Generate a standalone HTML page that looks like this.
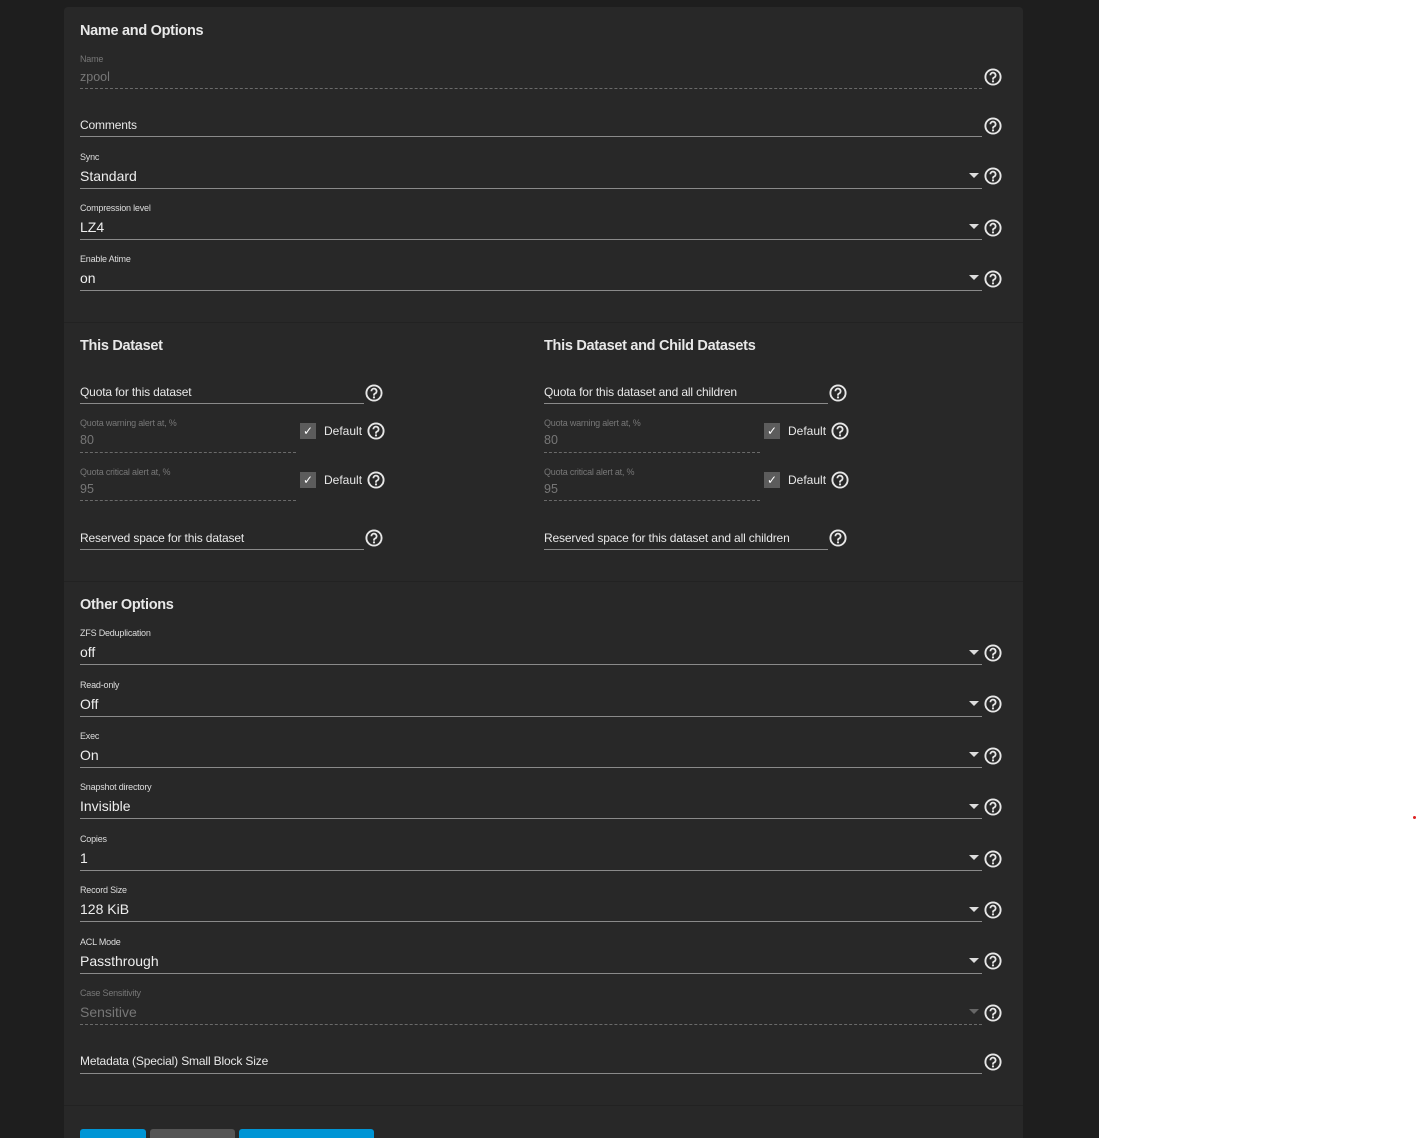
<!DOCTYPE html>
<html><head><meta charset="utf-8"><style>
*{margin:0;padding:0;box-sizing:border-box}
html,body{width:1418px;height:1138px;overflow:hidden}
body{background:#fff;font-family:"Liberation Sans",sans-serif;position:relative}
#bg{position:absolute;left:0;top:0;width:1099px;height:1138px;background:#1e1e1e}
#card{position:absolute;left:64px;top:7px;width:959px;height:1131px;background:#282828;border-radius:4px 4px 0 0}
.a{position:absolute;white-space:nowrap;line-height:1}
.t{font-size:14.5px;font-weight:bold;color:#e8e8e8;letter-spacing:-0.3px}
.l{font-size:9px;color:#ddd;letter-spacing:-0.2px}
.ld{font-size:9px;color:#777;letter-spacing:-0.2px}
.v{font-size:14px;color:#eee}
.vd{font-size:12.5px;color:#777}
.p{font-size:12px;color:#e8e8e8;letter-spacing:-0.15px}
.ln{position:absolute;height:1px;background:#8a8a8a}
.dl{position:absolute;height:0;border-top:1px dashed #6a6a6a}
.sep{position:absolute;left:64px;width:959px;height:1px;background:#222}
.h{position:absolute;width:18px;height:18px}
.ar{position:absolute;width:0;height:0;border-left:5px solid transparent;border-right:5px solid transparent;border-top:5px solid #ddd}
.cb{position:absolute;width:16px;height:16px;background:#5c5c5c}
.ck{position:absolute;color:#fff;font-size:12px;line-height:1}
.df{font-size:12px;color:#e8e8e8}
.btn{position:absolute;top:1129px;height:9px;border-radius:3px 3px 0 0}
</style></head><body>
<div id="bg"></div>
<div id="card"></div>
<svg width="0" height="0" style="position:absolute"><defs><symbol id="q" viewBox="0 0 18 18"><circle cx="9" cy="9" r="7.6" fill="none" stroke="#e6e6e6" stroke-width="1.9"/><path d="M6.4 7.2a2.6 2.6 0 1 1 3.6 2.4c-.7.3-1 .8-1 1.5v.5" fill="none" stroke="#e6e6e6" stroke-width="1.8"/><circle cx="9" cy="13.4" r="1.1" fill="#e6e6e6"/></symbol></defs></svg>

<div class="a t" style="left:80px;top:24px">Name and Options</div>
<div class="a ld" style="left:80px;top:55px">Name</div>
<div class="a vd" style="left:80px;top:71px">zpool</div>
<div class="dl" style="left:80px;width:902px;top:88px"></div>
<svg class="h" style="left:984px;top:68px"><use href="#q"/></svg>

<div class="a p" style="left:80px;top:119px">Comments</div>
<div class="ln" style="left:80px;width:902px;top:136px"></div>
<svg class="h" style="left:984px;top:117px"><use href="#q"/></svg>

<div class="a l" style="left:80px;top:153px">Sync</div>
<div class="a v" style="left:80px;top:169px">Standard</div>
<div class="ln" style="left:80px;width:902px;top:188px"></div>
<div class="ar" style="left:969px;top:173px"></div>
<svg class="h" style="left:984px;top:167px"><use href="#q"/></svg>

<div class="a l" style="left:80px;top:204px">Compression level</div>
<div class="a v" style="left:80px;top:220px">LZ4</div>
<div class="ln" style="left:80px;width:902px;top:239px"></div>
<div class="ar" style="left:969px;top:224px"></div>
<svg class="h" style="left:984px;top:219px"><use href="#q"/></svg>

<div class="a l" style="left:80px;top:255px">Enable Atime</div>
<div class="a v" style="left:80px;top:271px">on</div>
<div class="ln" style="left:80px;width:902px;top:290px"></div>
<div class="ar" style="left:969px;top:275px"></div>
<svg class="h" style="left:984px;top:270px"><use href="#q"/></svg>

<div class="sep" style="top:322px"></div>

<div class="a t" style="left:80px;top:339px">This Dataset</div>
<div class="a p" style="left:80px;top:386px">Quota for this dataset</div>
<div class="ln" style="left:80px;width:284px;top:403px"></div>
<svg class="h" style="left:365px;top:384px"><use href="#q"/></svg>
<div class="a ld" style="left:80px;top:419px">Quota warning alert at, %</div>
<div class="a vd" style="left:80px;top:434px">80</div>
<div class="dl" style="left:80px;width:216px;top:452px"></div>
<div class="cb" style="left:300px;top:423px"></div><div class="ck" style="left:303px;top:425px">✓</div>
<div class="a df" style="left:324px;top:425px">Default</div>
<svg class="h" style="left:367px;top:422px"><use href="#q"/></svg>
<div class="a ld" style="left:80px;top:468px">Quota critical alert at, %</div>
<div class="a vd" style="left:80px;top:483px">95</div>
<div class="dl" style="left:80px;width:216px;top:500px"></div>
<div class="cb" style="left:300px;top:472px"></div><div class="ck" style="left:303px;top:474px">✓</div>
<div class="a df" style="left:324px;top:474px">Default</div>
<svg class="h" style="left:367px;top:471px"><use href="#q"/></svg>
<div class="a p" style="left:80px;top:532px">Reserved space for this dataset</div>
<div class="ln" style="left:80px;width:284px;top:549px"></div>
<svg class="h" style="left:365px;top:529px"><use href="#q"/></svg>

<div class="a t" style="left:544px;top:339px">This Dataset and Child Datasets</div>
<div class="a p" style="left:544px;top:386px">Quota for this dataset and all children</div>
<div class="ln" style="left:544px;width:284px;top:403px"></div>
<svg class="h" style="left:829px;top:384px"><use href="#q"/></svg>
<div class="a ld" style="left:544px;top:419px">Quota warning alert at, %</div>
<div class="a vd" style="left:544px;top:434px">80</div>
<div class="dl" style="left:544px;width:216px;top:452px"></div>
<div class="cb" style="left:764px;top:423px"></div><div class="ck" style="left:767px;top:425px">✓</div>
<div class="a df" style="left:788px;top:425px">Default</div>
<svg class="h" style="left:831px;top:422px"><use href="#q"/></svg>
<div class="a ld" style="left:544px;top:468px">Quota critical alert at, %</div>
<div class="a vd" style="left:544px;top:483px">95</div>
<div class="dl" style="left:544px;width:216px;top:500px"></div>
<div class="cb" style="left:764px;top:472px"></div><div class="ck" style="left:767px;top:474px">✓</div>
<div class="a df" style="left:788px;top:474px">Default</div>
<svg class="h" style="left:831px;top:471px"><use href="#q"/></svg>
<div class="a p" style="left:544px;top:532px">Reserved space for this dataset and all children</div>
<div class="ln" style="left:544px;width:284px;top:549px"></div>
<svg class="h" style="left:829px;top:529px"><use href="#q"/></svg>

<div class="sep" style="top:581px"></div>

<div class="a t" style="left:80px;top:598px">Other Options</div>

<div class="a l" style="left:80px;top:629px">ZFS Deduplication</div>
<div class="a v" style="left:80px;top:645px">off</div>
<div class="ln" style="left:80px;width:902px;top:664px"></div>
<div class="ar" style="left:969px;top:650px"></div>
<svg class="h" style="left:984px;top:644px"><use href="#q"/></svg>

<div class="a l" style="left:80px;top:681px">Read-only</div>
<div class="a v" style="left:80px;top:697px">Off</div>
<div class="ln" style="left:80px;width:902px;top:716px"></div>
<div class="ar" style="left:969px;top:701px"></div>
<svg class="h" style="left:984px;top:695px"><use href="#q"/></svg>

<div class="a l" style="left:80px;top:732px">Exec</div>
<div class="a v" style="left:80px;top:748px">On</div>
<div class="ln" style="left:80px;width:902px;top:767px"></div>
<div class="ar" style="left:969px;top:752px"></div>
<svg class="h" style="left:984px;top:747px"><use href="#q"/></svg>

<div class="a l" style="left:80px;top:783px">Snapshot directory</div>
<div class="a v" style="left:80px;top:799px">Invisible</div>
<div class="ln" style="left:80px;width:902px;top:818px"></div>
<div class="ar" style="left:969px;top:804px"></div>
<svg class="h" style="left:984px;top:798px"><use href="#q"/></svg>

<div class="a l" style="left:80px;top:835px">Copies</div>
<div class="a v" style="left:80px;top:851px">1</div>
<div class="ln" style="left:80px;width:902px;top:870px"></div>
<div class="ar" style="left:969px;top:855px"></div>
<svg class="h" style="left:984px;top:850px"><use href="#q"/></svg>

<div class="a l" style="left:80px;top:886px">Record Size</div>
<div class="a v" style="left:80px;top:902px">128 KiB</div>
<div class="ln" style="left:80px;width:902px;top:921px"></div>
<div class="ar" style="left:969px;top:907px"></div>
<svg class="h" style="left:984px;top:901px"><use href="#q"/></svg>

<div class="a l" style="left:80px;top:938px">ACL Mode</div>
<div class="a v" style="left:80px;top:954px">Passthrough</div>
<div class="ln" style="left:80px;width:902px;top:973px"></div>
<div class="ar" style="left:969px;top:958px"></div>
<svg class="h" style="left:984px;top:952px"><use href="#q"/></svg>

<div class="a ld" style="left:80px;top:989px">Case Sensitivity</div>
<div class="a" style="left:80px;top:1005px;font-size:14px;color:#777">Sensitive</div>
<div class="dl" style="left:80px;width:902px;top:1024px"></div>
<div class="ar" style="left:969px;top:1009px;border-top-color:#666"></div>
<svg class="h" style="left:984px;top:1004px"><use href="#q"/></svg>

<div class="a p" style="left:80px;top:1055px">Metadata (Special) Small Block Size</div>
<div class="ln" style="left:80px;width:902px;top:1073px"></div>
<svg class="h" style="left:984px;top:1053px"><use href="#q"/></svg>

<div class="sep" style="top:1105px"></div>

<div class="btn" style="left:80px;width:66px;background:#0095d5"></div>
<div class="btn" style="left:150px;width:85px;background:#555"></div>
<div class="btn" style="left:239px;width:135px;background:#0095d5"></div>

<div style="position:absolute;left:1413px;top:816px;width:3px;height:3px;border-radius:50%;background:#d22"></div>
</body></html>
